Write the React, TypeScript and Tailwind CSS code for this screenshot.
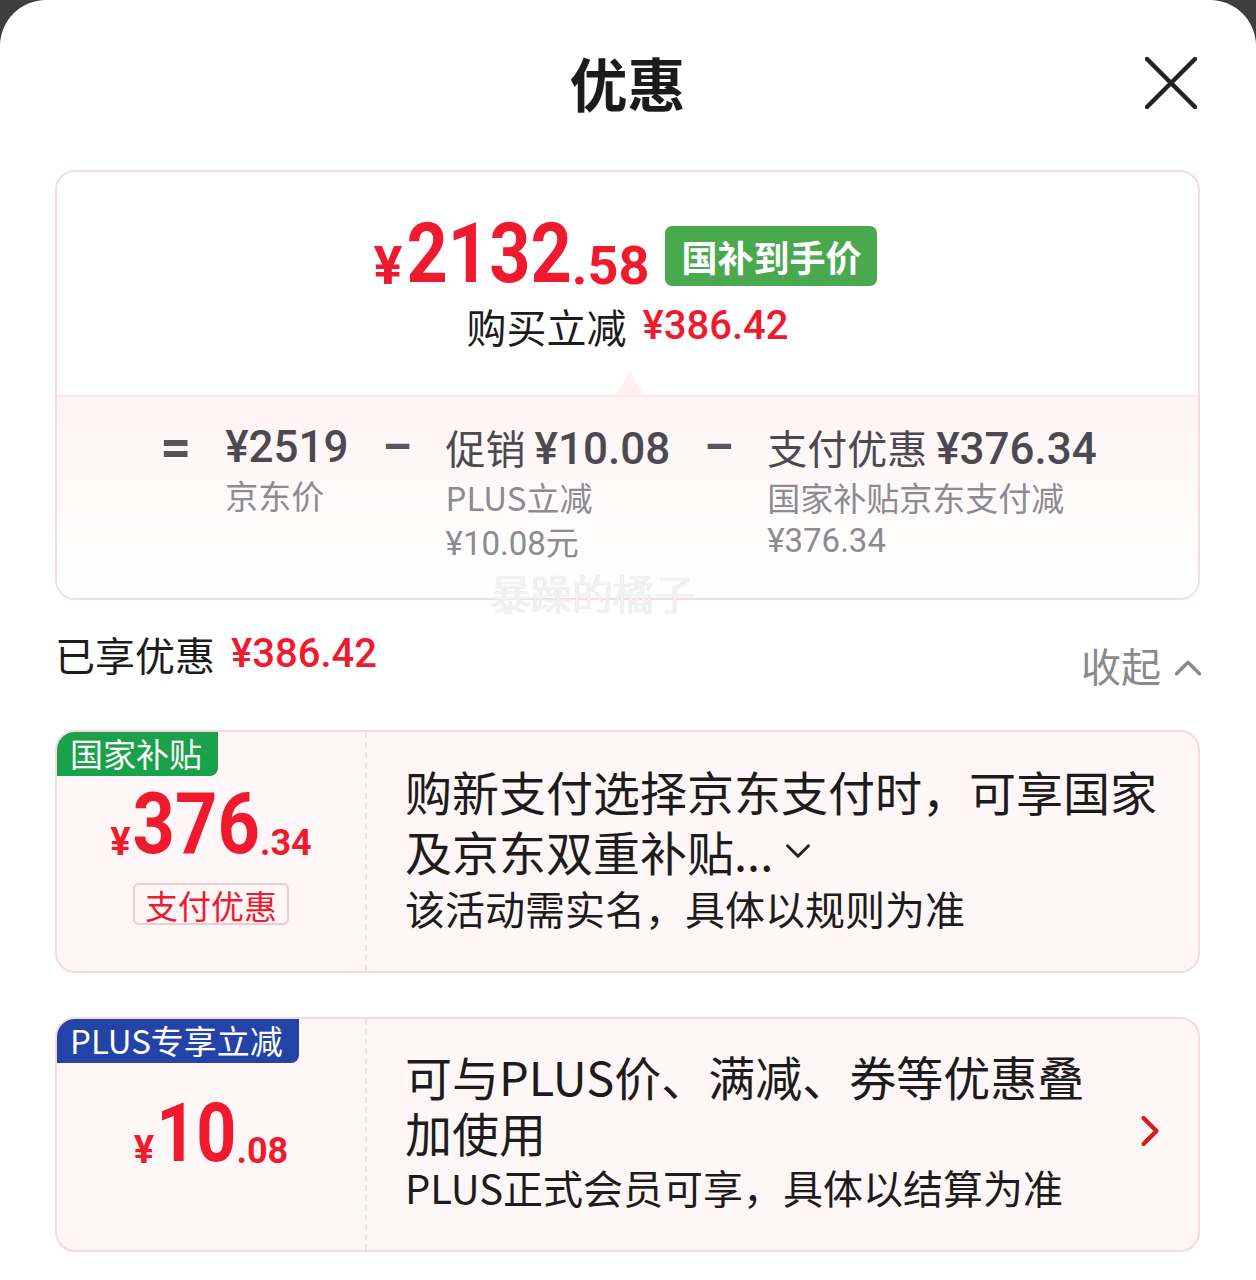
import { ChevronUp, ChevronDown, ChevronRight } from 'lucide-react';

const RED = 'text-[#f01a2e]';

function CloseIcon() {
  return (
    <svg width="52" height="52" viewBox="0 0 52 52" className="text-[#222]">
      <path d="M2 2 L50 50 M50 2 L2 50" stroke="currentColor" strokeWidth="4.5" strokeLinecap="round" />
    </svg>
  );
}

interface CardProps {
  tag: string;
  tagClass: string;
  yuan: string;
  cents: string;
  bigClass: string;
  badge?: string;
  lines: React.ReactNode[];
  lineClass: string;
  note: string;
  arrow?: boolean;
  height: string;
}

function OfferCard({ tag, tagClass, yuan, cents, bigClass, badge, lines, lineClass, note, arrow, height }: CardProps) {
  return (
    <div className={`relative flex ${height} rounded-[20px] border-2 border-[#f7d9df] bg-[#fff6f7] overflow-hidden`}>
      <div className={`absolute left-[-3px] top-[-2px] h-[46px] px-[16px] rounded-br-[8px] text-white text-[33px] leading-[46px] ${tagClass}`}>
        {tag}
      </div>
      <div className="w-[310px] shrink-0 flex flex-col items-center justify-center pt-[14px] border-r-2 border-dashed border-[#ece3e5]">
        <div className={`flex items-baseline font-['Roboto','Noto_Sans_CJK_SC',sans-serif] font-bold ${RED}`}>
          <span className="text-[38px] mr-[2px]">¥</span>
          <span className={`inline-block origin-bottom scale-y-[1.16] leading-none ${bigClass}`}>{yuan}</span>
          <span className="text-[36px]">.{cents}</span>
        </div>
        {badge && (
          <div className={`mt-[12px] px-[10px] h-[42px] leading-[40px] rounded-[6px] border-2 border-[#f4c9cf] text-[33px] ${RED}`}>
            {badge}
          </div>
        )}
      </div>
      <div className="flex-1 flex items-center pl-[38px] pr-[40px] pb-[8px]">
        <div className="flex-1 flex flex-col">
          {lines.map((l, i) => (
            <div key={i} className={`text-[47px] text-[#1c1c1c] whitespace-nowrap ${lineClass}`}>
              {l}
            </div>
          ))}
          <div className="text-[40px] leading-[54px] text-[#1c1c1c] whitespace-nowrap">{note}</div>
        </div>
        {arrow && <ChevronRight size={52} strokeWidth={2} className="text-[#d81c1c] shrink-0 mr-[-18px]" />}
      </div>
    </div>
  );
}

export default function App() {
  return (
    <div className="w-[1256px] h-[1280px] bg-[#3e3e3e] font-['Noto_Sans_CJK_SC',sans-serif]">
      <div className="h-full bg-white rounded-t-[46px] pl-[55px] pr-[56px] flex flex-col">
        {/* header */}
        <div className="relative h-[170px] shrink-0 flex items-start justify-center pt-[45px]">
          <h1 className="text-[58px] leading-[74px] font-bold text-[#1b1b1b]">优惠</h1>
          <button className="absolute right-[3px] top-[57px]">
            <CloseIcon />
          </button>
        </div>

        {/* summary */}
        <div className="relative h-[430px] shrink-0">
          <div className="h-full rounded-[20px] border-2 border-[#f7dbe1] overflow-hidden flex flex-col">
            <div className="h-[223px] shrink-0 flex flex-col items-center justify-center pt-[8px]">
              <div className="flex items-center gap-[16px] ml-[-4px]">
                <div className={`flex items-baseline font-['Roboto',sans-serif] font-bold ${RED}`}>
                  <span className="text-[54px] mr-[4px]">¥</span>
                  <span className="inline-block origin-bottom scale-y-[1.17] text-[72px] leading-none">2132</span>
                  <span className="text-[54px]">.58</span>
                </div>
                <div className="mb-[18px] h-[60px] px-[16px] rounded-[7px] bg-[#4aa94f] text-white text-[36px] font-bold leading-[60px]">
                  国补到手价
                </div>
              </div>
              <div className="mt-[-6px] flex items-center text-[40px] leading-[52px]">
                <span className="text-[#1c1c1c]">购买立减</span>
                <span className={`ml-[16px] font-['Roboto',sans-serif] font-medium ${RED}`}>¥386.42</span>
              </div>
            </div>

            <div className="relative border-t-2 border-[#fbe9ec]">
              <div className="absolute left-[559px] top-[-26px] w-0 h-0 border-l-[14px] border-r-[14px] border-b-[24px] border-l-transparent border-r-transparent border-b-[#fff0f2]" />
            </div>

            <div className="flex-1 bg-linear-to-b from-[#fff4f5] to-white flex justify-center gap-[34px] pt-[24px] pl-[2px]">
              <span className="text-[54px] leading-[52px] font-bold text-[#55555b] font-['Roboto',sans-serif]">=</span>
              <div className="flex flex-col">
                <span className="text-[44px] leading-[52px] font-medium text-[#4a4a50] font-['Roboto',sans-serif]">¥2519</span>
                <span className="text-[33px] leading-[44px] text-[#8b8b92]">京东价</span>
              </div>
              <span className="text-[46px] leading-[52px] font-bold text-[#55555b] font-['Roboto',sans-serif]">–</span>
              <div className="flex flex-col">
                <span className="text-[40px] leading-[52px] text-[#4a4a50]">
                  促销 <span className="font-['Roboto',sans-serif] font-medium text-[44px]">¥10.08</span>
                </span>
                <span className="text-[33px] leading-[44px] text-[#8b8b92]">PLUS立减</span>
                <span className="text-[33px] leading-[44px] text-[#8b8b92]">
                  <span className="font-['Roboto',sans-serif]">¥10.08</span>元
                </span>
              </div>
              <span className="text-[46px] leading-[52px] font-bold text-[#55555b] font-['Roboto',sans-serif]">–</span>
              <div className="flex flex-col">
                <span className="text-[40px] leading-[52px] text-[#4a4a50]">
                  支付优惠 <span className="font-['Roboto',sans-serif] font-medium text-[44px]">¥376.34</span>
                </span>
                <span className="text-[33px] leading-[44px] text-[#8b8b92]">国家补贴京东支付减</span>
                <span className="text-[33px] leading-[44px] text-[#8b8b92] font-['Roboto',sans-serif]">¥376.34</span>
              </div>
            </div>
          </div>

          <div className="absolute left-[435px] top-[398px] text-[41px] leading-[48px] text-[#f2f2f2] [text-shadow:0_0_1px_#d4d4d4]">
            暴躁的橘子
          </div>
        </div>

        {/* enjoyed */}
        <div className="h-[130px] shrink-0 flex items-start justify-between">
          <div className="mt-[30px] flex items-center text-[40px] leading-[48px]">
            <span className="text-[#1c1c1c]">已享优惠</span>
            <span className={`ml-[16px] font-['Roboto',sans-serif] font-medium ${RED}`}>¥386.42</span>
          </div>
          <div className="mt-[39px] flex items-center gap-[4px] text-[40px] leading-[48px] text-[#8a8a8a]">
            <span>收起</span>
            <ChevronUp size={46} strokeWidth={1.8} className="mr-[-11px] mt-[6px]" />
          </div>
        </div>

        <OfferCard
          height="h-[243px]"
          tag="国家补贴"
          tagClass="bg-[#1aa24a]"
          yuan="376"
          cents="34"
          bigClass="text-[74px]"
          badge="支付优惠"
          lineClass="leading-[60px]"
          lines={[
            '购新支付选择京东支付时，可享国家',
            <span className="inline-flex items-center">
              及京东双重补贴...
              <ChevronDown size={42} strokeWidth={1.7} className="ml-[4px] text-[#222]" />
            </span>,
          ]}
          note="该活动需实名，具体以规则为准"
        />

        <div className="h-[44px] shrink-0" />

        <OfferCard
          height="h-[235px]"
          tag="PLUS专享立减"
          tagClass="bg-[#2443a6]"
          yuan="10"
          cents="08"
          bigClass="text-[70px]"
          lineClass="leading-[56px]"
          lines={['可与PLUS价、满减、券等优惠叠', '加使用']}
          note="PLUS正式会员可享，具体以结算为准"
          arrow
        />
      </div>
    </div>
  );
}
